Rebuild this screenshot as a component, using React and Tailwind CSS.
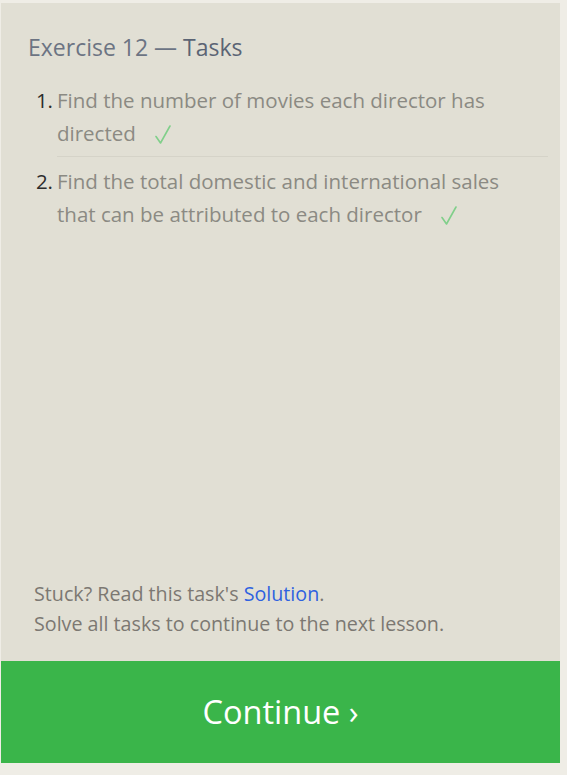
import React from "react";

const TASKS = [
  "Find the number of movies each director has directed",
  "Find the total domestic and international sales that can be attributed to each director",
];

function Check() {
  return (
    <svg
      viewBox="0 0 16 19"
      className="inline-block w-[16px] h-[19px] ml-[19px] align-[-3px]"
      fill="none"
      stroke="#80cf8a"
      strokeWidth="1.6"
      strokeLinecap="round"
      strokeLinejoin="round"
    >
      <path d="M1 11.5 L5.5 18 L15 1" />
    </svg>
  );
}

export default function App() {
  return (
    <div className="min-h-screen bg-[#efede6] pt-[3px] pl-[1px] pb-3 font-['Open_Sans',sans-serif]">
      <div className="w-[559px] h-[760px] flex flex-col bg-[#e1dfd4]">
        {/* ── Tasks ─── */}
        <div className="flex-1 pl-[27px] pr-[12px] pt-[29px]">
          <h2 className="text-[23px] leading-[30px] text-[#6c7483]">
            Exercise 12 — <span className="text-[#5b6474]">Tasks</span>
          </h2>
          <ol className="mt-[22px]">
            {TASKS.map((task, i) => (
              <li key={i} className="flex text-[20.5px] leading-[33px]">
                <span className="w-[29px] shrink-0 text-right pr-[4px] text-[#2c2c2c]">
                  {i + 1}.
                </span>
                <div
                  className={
                    i < TASKS.length - 1
                      ? "flex-1 text-[#8b8a83] pb-[6px] mb-[8px] border-b border-[#d5d3c8]"
                      : "flex-1 text-[#8b8a83]"
                  }
                >
                  <p className="max-w-[478px]">
                    {task}
                    <Check />
                  </p>
                </div>
              </li>
            ))}
          </ol>
        </div>

        {/* ── Footer ─── */}
        <div className="px-[33px] pb-[22px] text-[19.7px] leading-[30px] text-[#7c7872]">
          <p>
            Stuck? Read this task's{" "}
            <a href="#" className="text-[#2f62e0]">
              Solution
            </a>
            .
          </p>
          <p>Solve all tasks to continue to the next lesson.</p>
        </div>
        <button className="h-[102px] w-full bg-[#3ab54a] text-white text-[32.5px]">
          Continue ›
        </button>
      </div>
    </div>
  );
}
